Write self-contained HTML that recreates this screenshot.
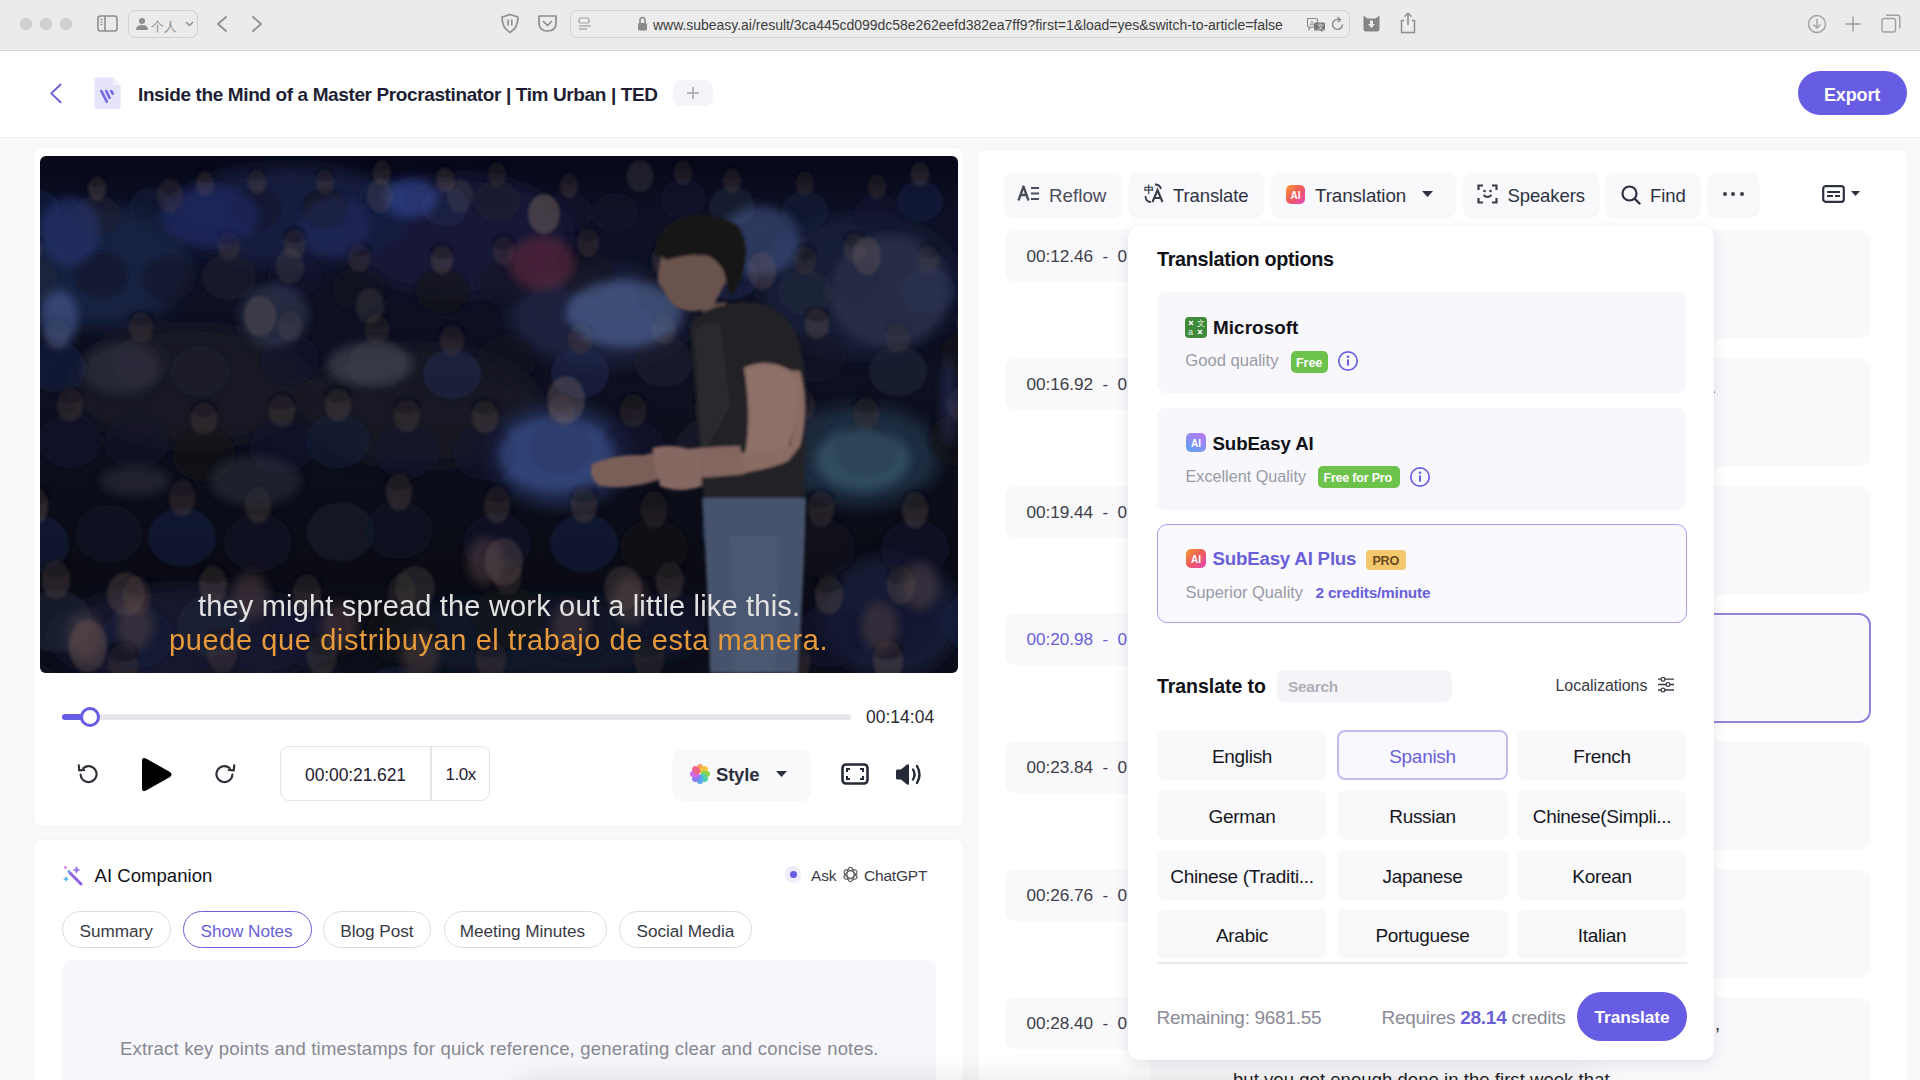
<!DOCTYPE html><html><head><meta charset="utf-8"><style>
html,body{margin:0;padding:0}
body{width:1920px;height:1080px;overflow:hidden;position:relative;background:#f9f9fb;font-family:"Liberation Sans",sans-serif}
.t{position:absolute;white-space:nowrap;line-height:1}
.b{position:absolute;box-sizing:border-box}
</style></head><body>
<div class="b" style="left:0px;top:0px;width:1920px;height:51px;background:#ebebeb;border-bottom:1px solid #d5d5d5"></div>
<div class="b" style="left:20px;top:18px;width:12px;height:12px;border-radius:50%;background:#d2d2d2;border:1px solid #c4c4c4"></div>
<div class="b" style="left:40px;top:18px;width:12px;height:12px;border-radius:50%;background:#d2d2d2;border:1px solid #c4c4c4"></div>
<div class="b" style="left:60px;top:18px;width:12px;height:12px;border-radius:50%;background:#d2d2d2;border:1px solid #c4c4c4"></div>
<svg class="b" style="left:97px;top:15px;" width="22" height="18" viewBox="0 0 22 18"><rect x="1" y="1" width="19" height="15" rx="2.5" fill="none" stroke="#8e8e8e" stroke-width="1.6"/><line x1="8" y1="1" x2="8" y2="16" stroke="#8e8e8e" stroke-width="1.6"/><line x1="3.5" y1="4.5" x2="5.5" y2="4.5" stroke="#8e8e8e" stroke-width="1.2"/><line x1="3.5" y1="7" x2="5.5" y2="7" stroke="#8e8e8e" stroke-width="1.2"/><line x1="3.5" y1="9.5" x2="5.5" y2="9.5" stroke="#8e8e8e" stroke-width="1.2"/></svg>
<div class="b" style="left:128px;top:10px;width:70px;height:28px;border:1px solid #d0d0d0;border-radius:7px"></div>
<svg class="b" style="left:135px;top:17px;" width="14" height="14" viewBox="0 0 14 14"><circle cx="7" cy="4" r="3" fill="#8e8e8e"/><path d="M1 13 Q1 8 7 8 Q13 8 13 13 Z" fill="#8e8e8e"/></svg>
<div class="t" style="left:151px;top:19.60px;font-size:13px;font-weight:400;color:#8e8e8e;">个人</div>
<svg class="b" style="left:185px;top:21px;" width="9" height="6" viewBox="0 0 9 6"><path d="M1 1 L4.5 4.5 L8 1" fill="none" stroke="#8e8e8e" stroke-width="1.5"/></svg>
<svg class="b" style="left:215px;top:15px;" width="14" height="18" viewBox="0 0 14 18"><path d="M11 2 L3 9 L11 16" fill="none" stroke="#8e8e8e" stroke-width="1.8" stroke-linecap="round" stroke-linejoin="round"/></svg>
<svg class="b" style="left:250px;top:15px;" width="14" height="18" viewBox="0 0 14 18"><path d="M3 2 L11 9 L3 16" fill="none" stroke="#8e8e8e" stroke-width="1.8" stroke-linecap="round" stroke-linejoin="round"/></svg>
<svg class="b" style="left:500px;top:13px;" width="20" height="21" viewBox="0 0 20 21"><path d="M10 1.5 L18 4 Q18 15 10 19.5 Q2 15 2 4 Z" fill="none" stroke="#8e8e8e" stroke-width="1.7" stroke-linejoin="round"/><rect x="7.3" y="6.5" width="1.6" height="6" fill="#8e8e8e"/><rect x="11" y="6.5" width="1.6" height="6" fill="#8e8e8e"/></svg>
<svg class="b" style="left:537px;top:14px;" width="21" height="19" viewBox="0 0 21 19"><path d="M2 2 H19 V9 Q19 17 10.5 17 Q2 17 2 9 Z" fill="none" stroke="#8e8e8e" stroke-width="1.7" stroke-linejoin="round"/><path d="M6.5 7.5 L10.5 11.5 L14.5 7.5" fill="none" stroke="#8e8e8e" stroke-width="1.7" stroke-linecap="round" stroke-linejoin="round"/></svg>
<div class="b" style="left:570px;top:10px;width:780px;height:28px;border:1px solid #d3d3d3;border-radius:7px;background:#ececec"></div>
<svg class="b" style="left:578px;top:17px;" width="14" height="15" viewBox="0 0 14 15"><rect x="1" y="1" width="10" height="5" rx="1.5" fill="none" stroke="#a0a0a0" stroke-width="1.2"/><line x1="1" y1="9" x2="13" y2="9" stroke="#a0a0a0" stroke-width="1.2"/><line x1="1" y1="12" x2="9" y2="12" stroke="#a0a0a0" stroke-width="1.2"/></svg>
<svg class="b" style="left:637px;top:16px;" width="11" height="15" viewBox="0 0 11 15"><path d="M3 7 V4.5 Q3 1.5 5.5 1.5 Q8 1.5 8 4.5 V7" fill="none" stroke="#8a8a8a" stroke-width="1.6"/><rect x="1" y="7" width="9" height="7.5" rx="1.5" fill="#8a8a8a"/></svg>
<div class="t" style="left:653px;top:17.75px;font-size:14px;font-weight:400;color:#3c3c3c;letter-spacing:-0.03px;">www.subeasy.ai/result/3ca445cd099dc58e262eefd382ea7ff9?first=1&amp;load=yes&amp;switch-to-article=false</div>
<svg class="b" style="left:1306px;top:17px;" width="20" height="16" viewBox="0 0 20 16"><path d="M1.5 1.5 H10 Q11.5 1.5 11.5 3 V8.5 Q11.5 10 10 10 H5 L3 12.5 V10 H3 Q1.5 10 1.5 8.5 Z" fill="none" stroke="#8a8a8a" stroke-width="1.1"/><text x="3.5" y="8.5" font-size="7" fill="#8a8a8a" font-family="Liberation Sans">A</text><path d="M9.5 5.5 H17.5 Q19 5.5 19 7 V12 Q19 13.5 17.5 13.5 H16.5 V15.5 L14.5 13.5 H9.5 Q8 13.5 8 12 V7 Q8 5.5 9.5 5.5 Z" fill="#7a7a7a"/><text x="11" y="12.3" font-size="6.5" fill="#ececec" font-family="Liberation Sans">文</text></svg>
<svg class="b" style="left:1331px;top:16px;" width="14" height="16" viewBox="0 0 14 16"><path d="M11.5 8.5 A5 5 0 1 1 8 3.6" fill="none" stroke="#8a8a8a" stroke-width="1.4"/><path d="M6.5 1 L9.5 3.7 L6.8 6.3" fill="none" stroke="#8a8a8a" stroke-width="1.4"/></svg>
<svg class="b" style="left:1362px;top:14px;" width="19" height="19" viewBox="0 0 19 19"><path d="M1.5 1.5 L5.5 4.5 H13.5 L17.5 1.5 V15 Q17.5 17.5 15 17.5 H4 Q1.5 17.5 1.5 15 Z" fill="#858585"/><path d="M8 6.5 H11 V10 H13 L9.5 14 L6 10 H8 Z" fill="#ececec"/></svg>
<svg class="b" style="left:1399px;top:12px;" width="18" height="22" viewBox="0 0 18 22"><path d="M5 8.5 H2.5 V20.5 H15.5 V8.5 H13" fill="none" stroke="#8e8e8e" stroke-width="1.5" stroke-linejoin="round"/><line x1="9" y1="1.5" x2="9" y2="13" stroke="#8e8e8e" stroke-width="1.5"/><path d="M5.5 4.5 L9 1.2 L12.5 4.5" fill="none" stroke="#8e8e8e" stroke-width="1.5"/></svg>
<svg class="b" style="left:1807px;top:14px;" width="20" height="20" viewBox="0 0 20 20"><circle cx="10" cy="10" r="8.5" fill="none" stroke="#a0a0a0" stroke-width="1.4"/><line x1="10" y1="5" x2="10" y2="14" stroke="#a0a0a0" stroke-width="1.4"/><path d="M6.5 10.5 L10 14 L13.5 10.5" fill="none" stroke="#a0a0a0" stroke-width="1.4"/></svg>
<svg class="b" style="left:1844px;top:15px;" width="18" height="18" viewBox="0 0 18 18"><line x1="9" y1="1.5" x2="9" y2="16.5" stroke="#a0a0a0" stroke-width="1.6"/><line x1="1.5" y1="9" x2="16.5" y2="9" stroke="#a0a0a0" stroke-width="1.6"/></svg>
<svg class="b" style="left:1881px;top:14px;" width="20" height="20" viewBox="0 0 20 20"><rect x="1" y="4.5" width="13.5" height="13.5" rx="2" fill="none" stroke="#a0a0a0" stroke-width="1.4"/><path d="M5 1.2 H16.5 Q18.8 1.2 18.8 3.5 V14.5" fill="none" stroke="#a0a0a0" stroke-width="1.4"/></svg>
<div class="b" style="left:0px;top:51px;width:1920px;height:87px;background:#ffffff;border-bottom:1px solid #f0f0f4"></div>
<svg class="b" style="left:48px;top:83px;" width="16" height="22" viewBox="0 0 16 22"><path d="M12.6 1.5 L3.3 10.4 L12.6 19.3" fill="none" stroke="#6a5fd8" stroke-width="1.9" stroke-linecap="round" stroke-linejoin="round"/></svg>
<svg class="b" style="left:93px;top:77px;" width="29" height="33" viewBox="0 0 29 33"><path d="M3 0.5 H20 L27.6 8 V30 Q27.6 32 25.6 32 H3.4 Q1.4 32 1.4 30 V2.5 Q1.4 0.5 3 0.5 Z" fill="#e6e4fa"/><path d="M20 0.5 V8 H27.6 Z" fill="#f3f2fd"/><path d="M8.3 14 L13.8 24.6 M13.2 14 L16.6 20.8 M18.2 14 L19.8 16.6" stroke="#7468e6" stroke-width="2.6" stroke-linecap="round"/></svg>
<div class="t" style="left:138px;top:84.92px;font-size:19px;font-weight:700;color:#1e1f33;letter-spacing:-0.38px;">Inside the Mind of a Master Procrastinator | Tim Urban | TED</div>
<div class="b" style="left:673px;top:80px;width:40px;height:26px;background:#f4f4f9;border-radius:8px"></div>
<svg class="b" style="left:685px;top:85px;" width="16" height="16" viewBox="0 0 16 16"><line x1="8" y1="2" x2="8" y2="14" stroke="#a3a3ad" stroke-width="1.5"/><line x1="2" y1="8" x2="14" y2="8" stroke="#a3a3ad" stroke-width="1.5"/></svg>
<div class="b" style="left:1798px;top:71px;width:109px;height:44px;background:#675ce4;border-radius:22px"></div>
<div class="t" style="left:1824px;top:85.96px;font-size:18px;font-weight:700;color:#ffffff;letter-spacing:-0.15px;">Export</div>
<div class="b" style="left:34px;top:148px;width:929px;height:678px;background:#fff;border-radius:8px;box-shadow:0 0 3px rgba(20,20,60,0.05)"></div>
<svg class="b" style="left:40px;top:156px;border-radius:6px;overflow:hidden" width="918" height="517" viewBox="0 0 918 517"><defs><filter id="b3" x="-20%" y="-20%" width="140%" height="140%"><feGaussianBlur stdDeviation="5"/></filter><filter id="b8" x="-50%" y="-50%" width="200%" height="200%"><feGaussianBlur stdDeviation="8"/></filter><filter id="b1" x="-20%" y="-20%" width="140%" height="140%"><feGaussianBlur stdDeviation="1.6"/></filter><linearGradient id="vg" x1="0" y1="0" x2="0" y2="1"><stop offset="0" stop-color="#070818"/><stop offset="0.12" stop-color="#0e1126"/><stop offset="0.45" stop-color="#0e1020"/><stop offset="0.8" stop-color="#0a0b14"/><stop offset="1" stop-color="#0c0e1a"/></linearGradient></defs><rect width="918" height="517" fill="url(#vg)"/><g filter="url(#b8)"><ellipse cx="60" cy="110" rx="90" ry="60" fill="#1c2448" opacity="0.8"/><ellipse cx="250" cy="60" rx="120" ry="50" fill="#1a2046" opacity="0.8"/><ellipse cx="420" cy="80" rx="110" ry="60" fill="#1a2040" opacity="0.7"/><ellipse cx="560" cy="160" rx="90" ry="50" fill="#222a48" opacity="0.7"/><ellipse cx="820" cy="130" rx="100" ry="70" fill="#1f2540" opacity="0.7"/><ellipse cx="150" cy="230" rx="120" ry="60" fill="#1a1c28" opacity="0.6"/><ellipse cx="380" cy="250" rx="120" ry="60" fill="#1b1d2a" opacity="0.6"/><ellipse cx="520" cy="300" rx="70" ry="50" fill="#263560" opacity="0.8"/><ellipse cx="820" cy="300" rx="80" ry="50" fill="#22344a" opacity="0.8"/><ellipse cx="150" cy="480" rx="140" ry="50" fill="#1a2036" opacity="0.7"/><ellipse cx="500" cy="480" rx="160" ry="40" fill="#161c34" opacity="0.6"/><ellipse cx="850" cy="460" rx="70" ry="60" fill="#1a2444" opacity="0.7"/></g><g filter="url(#b1)"><ellipse cx="-3" cy="54" rx="23" ry="20" fill="#1a2244" opacity="0.55"/><ellipse cx="57" cy="60" rx="23" ry="20" fill="#1c1f2e" opacity="0.55"/><ellipse cx="57" cy="33" rx="9" ry="12" fill="#5e4e4a" opacity="0.38"/><ellipse cx="57" cy="25" rx="10" ry="7" fill="#0c0c12" opacity="0.35"/><ellipse cx="112" cy="52" rx="23" ry="20" fill="#161c3a" opacity="0.55"/><ellipse cx="165" cy="54" rx="23" ry="20" fill="#161c3a" opacity="0.55"/><ellipse cx="165" cy="28" rx="9" ry="12" fill="#5e4e4a" opacity="0.38"/><ellipse cx="165" cy="20" rx="10" ry="7" fill="#0c0c12" opacity="0.35"/><ellipse cx="217" cy="53" rx="23" ry="20" fill="#13162a" opacity="0.55"/><ellipse cx="217" cy="26" rx="9" ry="12" fill="#554644" opacity="0.38"/><ellipse cx="217" cy="18" rx="10" ry="7" fill="#0c0c12" opacity="0.35"/><ellipse cx="285" cy="53" rx="23" ry="20" fill="#0e1018" opacity="0.55"/><ellipse cx="285" cy="26" rx="9" ry="12" fill="#4a3e3c" opacity="0.38"/><ellipse cx="285" cy="19" rx="10" ry="7" fill="#0c0c12" opacity="0.35"/><ellipse cx="342" cy="43" rx="23" ry="20" fill="#1a2244" opacity="0.55"/><ellipse cx="342" cy="17" rx="9" ry="12" fill="#4a3e3c" opacity="0.38"/><ellipse cx="342" cy="9" rx="10" ry="7" fill="#0c0c12" opacity="0.35"/><ellipse cx="405" cy="50" rx="23" ry="20" fill="#1e2850" opacity="0.55"/><ellipse cx="405" cy="24" rx="9" ry="12" fill="#5e4e4a" opacity="0.38"/><ellipse cx="405" cy="16" rx="10" ry="7" fill="#0c0c12" opacity="0.35"/><ellipse cx="457" cy="45" rx="23" ry="20" fill="#1c1f2e" opacity="0.55"/><ellipse cx="457" cy="19" rx="9" ry="12" fill="#3e3434" opacity="0.38"/><ellipse cx="457" cy="11" rx="10" ry="7" fill="#0c0c12" opacity="0.35"/><ellipse cx="529" cy="56" rx="23" ry="20" fill="#151932" opacity="0.55"/><ellipse cx="529" cy="30" rx="9" ry="12" fill="#4a3c3c" opacity="0.38"/><ellipse cx="529" cy="22" rx="10" ry="7" fill="#0c0c12" opacity="0.35"/><ellipse cx="575" cy="57" rx="23" ry="20" fill="#13162a" opacity="0.55"/><ellipse cx="643" cy="43" rx="23" ry="20" fill="#121830" opacity="0.55"/><ellipse cx="643" cy="17" rx="9" ry="12" fill="#3e3434" opacity="0.38"/><ellipse cx="643" cy="9" rx="10" ry="7" fill="#0c0c12" opacity="0.35"/><ellipse cx="692" cy="51" rx="23" ry="20" fill="#22263a" opacity="0.55"/><ellipse cx="692" cy="25" rx="9" ry="12" fill="#4a3c3c" opacity="0.38"/><ellipse cx="692" cy="17" rx="10" ry="7" fill="#0c0c12" opacity="0.35"/><ellipse cx="765" cy="55" rx="23" ry="20" fill="#161c3a" opacity="0.55"/><ellipse cx="765" cy="28" rx="9" ry="12" fill="#3e3434" opacity="0.38"/><ellipse cx="765" cy="21" rx="10" ry="7" fill="#0c0c12" opacity="0.35"/><ellipse cx="837" cy="58" rx="23" ry="20" fill="#151932" opacity="0.55"/><ellipse cx="837" cy="31" rx="9" ry="12" fill="#3e3434" opacity="0.38"/><ellipse cx="837" cy="24" rx="10" ry="7" fill="#0c0c12" opacity="0.35"/><ellipse cx="880" cy="45" rx="23" ry="20" fill="#1a2244" opacity="0.55"/><ellipse cx="880" cy="18" rx="9" ry="12" fill="#554644" opacity="0.38"/><ellipse cx="880" cy="11" rx="10" ry="7" fill="#0c0c12" opacity="0.35"/><ellipse cx="-9" cy="124" rx="27" ry="23" fill="#22263a" opacity="0.55"/><ellipse cx="-9" cy="93" rx="11" ry="14" fill="#5e4e4a" opacity="0.38"/><ellipse cx="-9" cy="84" rx="12" ry="8" fill="#0c0c12" opacity="0.35"/><ellipse cx="61" cy="119" rx="27" ry="23" fill="#171a2a" opacity="0.55"/><ellipse cx="129" cy="123" rx="27" ry="23" fill="#171a2a" opacity="0.55"/><ellipse cx="189" cy="121" rx="27" ry="23" fill="#1c1f2e" opacity="0.55"/><ellipse cx="189" cy="90" rx="11" ry="14" fill="#4a3e3c" opacity="0.38"/><ellipse cx="189" cy="81" rx="12" ry="8" fill="#0c0c12" opacity="0.35"/><ellipse cx="255" cy="119" rx="27" ry="23" fill="#121830" opacity="0.55"/><ellipse cx="255" cy="88" rx="11" ry="14" fill="#4a3e3c" opacity="0.38"/><ellipse cx="255" cy="79" rx="12" ry="8" fill="#0c0c12" opacity="0.35"/><ellipse cx="319" cy="133" rx="27" ry="23" fill="#101220" opacity="0.55"/><ellipse cx="319" cy="102" rx="11" ry="14" fill="#4a3c3c" opacity="0.38"/><ellipse cx="319" cy="93" rx="12" ry="8" fill="#0c0c12" opacity="0.35"/><ellipse cx="402" cy="135" rx="27" ry="23" fill="#0e1018" opacity="0.55"/><ellipse cx="402" cy="104" rx="11" ry="14" fill="#5e4e4a" opacity="0.38"/><ellipse cx="402" cy="95" rx="12" ry="8" fill="#0c0c12" opacity="0.35"/><ellipse cx="464" cy="126" rx="27" ry="23" fill="#171a2a" opacity="0.55"/><ellipse cx="464" cy="95" rx="11" ry="14" fill="#4a3c3c" opacity="0.38"/><ellipse cx="464" cy="86" rx="12" ry="8" fill="#0c0c12" opacity="0.35"/><ellipse cx="548" cy="118" rx="27" ry="23" fill="#101220" opacity="0.55"/><ellipse cx="548" cy="87" rx="11" ry="14" fill="#4a3c3c" opacity="0.38"/><ellipse cx="548" cy="78" rx="12" ry="8" fill="#0c0c12" opacity="0.35"/><ellipse cx="623" cy="135" rx="27" ry="23" fill="#101220" opacity="0.55"/><ellipse cx="623" cy="104" rx="11" ry="14" fill="#554644" opacity="0.38"/><ellipse cx="623" cy="95" rx="12" ry="8" fill="#0c0c12" opacity="0.35"/><ellipse cx="691" cy="121" rx="27" ry="23" fill="#1e2850" opacity="0.55"/><ellipse cx="691" cy="90" rx="11" ry="14" fill="#5e4e4a" opacity="0.38"/><ellipse cx="691" cy="81" rx="12" ry="8" fill="#0c0c12" opacity="0.35"/><ellipse cx="765" cy="136" rx="27" ry="23" fill="#22263a" opacity="0.55"/><ellipse cx="765" cy="105" rx="11" ry="14" fill="#3e3434" opacity="0.38"/><ellipse cx="765" cy="96" rx="12" ry="8" fill="#0c0c12" opacity="0.35"/><ellipse cx="815" cy="123" rx="27" ry="23" fill="#151932" opacity="0.55"/><ellipse cx="815" cy="92" rx="11" ry="14" fill="#554644" opacity="0.38"/><ellipse cx="815" cy="83" rx="12" ry="8" fill="#0c0c12" opacity="0.35"/><ellipse cx="888" cy="135" rx="27" ry="23" fill="#1e2850" opacity="0.55"/><ellipse cx="888" cy="104" rx="11" ry="14" fill="#4a3e3c" opacity="0.38"/><ellipse cx="888" cy="95" rx="12" ry="8" fill="#0c0c12" opacity="0.35"/><ellipse cx="17" cy="211" rx="29" ry="25" fill="#1a2244" opacity="0.55"/><ellipse cx="17" cy="178" rx="12" ry="15" fill="#3e3434" opacity="0.38"/><ellipse cx="17" cy="168" rx="13" ry="8" fill="#0c0c12" opacity="0.35"/><ellipse cx="101" cy="206" rx="29" ry="25" fill="#1c1f2e" opacity="0.55"/><ellipse cx="101" cy="172" rx="12" ry="15" fill="#4a3e3c" opacity="0.38"/><ellipse cx="101" cy="162" rx="13" ry="8" fill="#0c0c12" opacity="0.35"/><ellipse cx="160" cy="215" rx="29" ry="25" fill="#1c1f2e" opacity="0.55"/><ellipse cx="250" cy="203" rx="29" ry="25" fill="#121830" opacity="0.55"/><ellipse cx="250" cy="170" rx="12" ry="15" fill="#4a3c3c" opacity="0.38"/><ellipse cx="250" cy="160" rx="13" ry="8" fill="#0c0c12" opacity="0.35"/><ellipse cx="337" cy="208" rx="29" ry="25" fill="#1c1f2e" opacity="0.55"/><ellipse cx="337" cy="174" rx="12" ry="15" fill="#3e3434" opacity="0.38"/><ellipse cx="337" cy="165" rx="13" ry="8" fill="#0c0c12" opacity="0.35"/><ellipse cx="412" cy="218" rx="29" ry="25" fill="#1e2850" opacity="0.55"/><ellipse cx="412" cy="185" rx="12" ry="15" fill="#4a3c3c" opacity="0.38"/><ellipse cx="412" cy="175" rx="13" ry="8" fill="#0c0c12" opacity="0.35"/><ellipse cx="467" cy="203" rx="29" ry="25" fill="#101220" opacity="0.55"/><ellipse cx="540" cy="217" rx="29" ry="25" fill="#1e2850" opacity="0.55"/><ellipse cx="540" cy="183" rx="12" ry="15" fill="#4a3c3c" opacity="0.38"/><ellipse cx="540" cy="173" rx="13" ry="8" fill="#0c0c12" opacity="0.35"/><ellipse cx="624" cy="206" rx="29" ry="25" fill="#1c1f2e" opacity="0.55"/><ellipse cx="624" cy="173" rx="12" ry="15" fill="#554644" opacity="0.38"/><ellipse cx="624" cy="163" rx="13" ry="8" fill="#0c0c12" opacity="0.35"/><ellipse cx="705" cy="200" rx="29" ry="25" fill="#171a2a" opacity="0.55"/><ellipse cx="705" cy="167" rx="12" ry="15" fill="#4a3c3c" opacity="0.38"/><ellipse cx="705" cy="157" rx="13" ry="8" fill="#0c0c12" opacity="0.35"/><ellipse cx="777" cy="201" rx="29" ry="25" fill="#13162a" opacity="0.55"/><ellipse cx="777" cy="168" rx="12" ry="15" fill="#5e4e4a" opacity="0.38"/><ellipse cx="777" cy="158" rx="13" ry="8" fill="#0c0c12" opacity="0.35"/><ellipse cx="858" cy="215" rx="29" ry="25" fill="#22263a" opacity="0.55"/><ellipse cx="858" cy="182" rx="12" ry="15" fill="#3e3434" opacity="0.38"/><ellipse cx="858" cy="172" rx="13" ry="8" fill="#0c0c12" opacity="0.35"/><ellipse cx="929" cy="199" rx="29" ry="25" fill="#0e1018" opacity="0.55"/><ellipse cx="929" cy="165" rx="12" ry="15" fill="#554644" opacity="0.38"/><ellipse cx="929" cy="156" rx="13" ry="8" fill="#0c0c12" opacity="0.35"/><ellipse cx="30" cy="285" rx="32" ry="27" fill="#151932" opacity="0.55"/><ellipse cx="30" cy="249" rx="13" ry="16" fill="#4a3e3c" opacity="0.38"/><ellipse cx="30" cy="239" rx="14" ry="9" fill="#0c0c12" opacity="0.35"/><ellipse cx="96" cy="286" rx="32" ry="27" fill="#171a2a" opacity="0.55"/><ellipse cx="164" cy="299" rx="32" ry="27" fill="#0e1018" opacity="0.55"/><ellipse cx="164" cy="263" rx="13" ry="16" fill="#4a3e3c" opacity="0.38"/><ellipse cx="164" cy="252" rx="14" ry="9" fill="#0c0c12" opacity="0.35"/><ellipse cx="242" cy="291" rx="32" ry="27" fill="#121830" opacity="0.55"/><ellipse cx="242" cy="255" rx="13" ry="16" fill="#4a3e3c" opacity="0.38"/><ellipse cx="242" cy="245" rx="14" ry="9" fill="#0c0c12" opacity="0.35"/><ellipse cx="298" cy="285" rx="32" ry="27" fill="#161c3a" opacity="0.55"/><ellipse cx="298" cy="249" rx="13" ry="16" fill="#554644" opacity="0.38"/><ellipse cx="298" cy="238" rx="14" ry="9" fill="#0c0c12" opacity="0.35"/><ellipse cx="367" cy="296" rx="32" ry="27" fill="#121830" opacity="0.55"/><ellipse cx="367" cy="260" rx="13" ry="16" fill="#4a3e3c" opacity="0.38"/><ellipse cx="367" cy="249" rx="14" ry="9" fill="#0c0c12" opacity="0.35"/><ellipse cx="445" cy="297" rx="32" ry="27" fill="#121830" opacity="0.55"/><ellipse cx="445" cy="261" rx="13" ry="16" fill="#554644" opacity="0.38"/><ellipse cx="445" cy="250" rx="14" ry="9" fill="#0c0c12" opacity="0.35"/><ellipse cx="521" cy="291" rx="32" ry="27" fill="#121830" opacity="0.55"/><ellipse cx="521" cy="255" rx="13" ry="16" fill="#4a3c3c" opacity="0.38"/><ellipse cx="521" cy="245" rx="14" ry="9" fill="#0c0c12" opacity="0.35"/><ellipse cx="593" cy="291" rx="32" ry="27" fill="#121830" opacity="0.55"/><ellipse cx="593" cy="255" rx="13" ry="16" fill="#3e3434" opacity="0.38"/><ellipse cx="593" cy="245" rx="14" ry="9" fill="#0c0c12" opacity="0.35"/><ellipse cx="668" cy="291" rx="32" ry="27" fill="#1c1f2e" opacity="0.55"/><ellipse cx="668" cy="255" rx="13" ry="16" fill="#3e3434" opacity="0.38"/><ellipse cx="668" cy="244" rx="14" ry="9" fill="#0c0c12" opacity="0.35"/><ellipse cx="762" cy="285" rx="32" ry="27" fill="#22263a" opacity="0.55"/><ellipse cx="762" cy="249" rx="13" ry="16" fill="#4a3c3c" opacity="0.38"/><ellipse cx="762" cy="239" rx="14" ry="9" fill="#0c0c12" opacity="0.35"/><ellipse cx="826" cy="294" rx="32" ry="27" fill="#171a2a" opacity="0.55"/><ellipse cx="826" cy="258" rx="13" ry="16" fill="#3e3434" opacity="0.38"/><ellipse cx="826" cy="248" rx="14" ry="9" fill="#0c0c12" opacity="0.35"/><ellipse cx="920" cy="284" rx="32" ry="27" fill="#0e1018" opacity="0.55"/><ellipse cx="920" cy="248" rx="13" ry="16" fill="#554644" opacity="0.38"/><ellipse cx="920" cy="238" rx="14" ry="9" fill="#0c0c12" opacity="0.35"/><ellipse cx="-5" cy="388" rx="34" ry="29" fill="#1a2244" opacity="0.55"/><ellipse cx="-5" cy="350" rx="13" ry="18" fill="#5e4e4a" opacity="0.38"/><ellipse cx="-5" cy="339" rx="14" ry="10" fill="#0c0c12" opacity="0.35"/><ellipse cx="69" cy="378" rx="34" ry="29" fill="#171a2a" opacity="0.55"/><ellipse cx="142" cy="381" rx="34" ry="29" fill="#1a2244" opacity="0.55"/><ellipse cx="142" cy="342" rx="13" ry="18" fill="#4a3c3c" opacity="0.38"/><ellipse cx="142" cy="331" rx="14" ry="10" fill="#0c0c12" opacity="0.35"/><ellipse cx="218" cy="387" rx="34" ry="29" fill="#171a2a" opacity="0.55"/><ellipse cx="218" cy="349" rx="13" ry="18" fill="#4a3e3c" opacity="0.38"/><ellipse cx="218" cy="338" rx="14" ry="10" fill="#0c0c12" opacity="0.35"/><ellipse cx="301" cy="376" rx="34" ry="29" fill="#1c1f2e" opacity="0.55"/><ellipse cx="359" cy="374" rx="34" ry="29" fill="#13162a" opacity="0.55"/><ellipse cx="359" cy="336" rx="13" ry="18" fill="#554644" opacity="0.38"/><ellipse cx="359" cy="325" rx="14" ry="10" fill="#0c0c12" opacity="0.35"/><ellipse cx="457" cy="387" rx="34" ry="29" fill="#151932" opacity="0.55"/><ellipse cx="457" cy="349" rx="13" ry="18" fill="#4a3e3c" opacity="0.38"/><ellipse cx="457" cy="337" rx="14" ry="10" fill="#0c0c12" opacity="0.35"/><ellipse cx="544" cy="387" rx="34" ry="29" fill="#1a2244" opacity="0.55"/><ellipse cx="544" cy="349" rx="13" ry="18" fill="#554644" opacity="0.38"/><ellipse cx="544" cy="338" rx="14" ry="10" fill="#0c0c12" opacity="0.35"/><ellipse cx="614" cy="392" rx="34" ry="29" fill="#0e1018" opacity="0.55"/><ellipse cx="614" cy="354" rx="13" ry="18" fill="#3e3434" opacity="0.38"/><ellipse cx="614" cy="343" rx="14" ry="10" fill="#0c0c12" opacity="0.35"/><ellipse cx="695" cy="375" rx="34" ry="29" fill="#1a2244" opacity="0.55"/><ellipse cx="695" cy="336" rx="13" ry="18" fill="#3e3434" opacity="0.38"/><ellipse cx="695" cy="325" rx="14" ry="10" fill="#0c0c12" opacity="0.35"/><ellipse cx="781" cy="392" rx="34" ry="29" fill="#101220" opacity="0.55"/><ellipse cx="781" cy="353" rx="13" ry="18" fill="#4a3e3c" opacity="0.38"/><ellipse cx="781" cy="342" rx="14" ry="10" fill="#0c0c12" opacity="0.35"/><ellipse cx="875" cy="393" rx="34" ry="29" fill="#151932" opacity="0.55"/><ellipse cx="875" cy="354" rx="13" ry="18" fill="#554644" opacity="0.38"/><ellipse cx="875" cy="343" rx="14" ry="10" fill="#0c0c12" opacity="0.35"/><ellipse cx="16" cy="465" rx="36" ry="31" fill="#22263a" opacity="0.55"/><ellipse cx="16" cy="424" rx="14" ry="19" fill="#554644" opacity="0.38"/><ellipse cx="16" cy="412" rx="15" ry="10" fill="#0c0c12" opacity="0.35"/><ellipse cx="97" cy="481" rx="36" ry="31" fill="#161c3a" opacity="0.55"/><ellipse cx="97" cy="440" rx="14" ry="19" fill="#4a3e3c" opacity="0.38"/><ellipse cx="97" cy="428" rx="15" ry="10" fill="#0c0c12" opacity="0.35"/><ellipse cx="173" cy="470" rx="36" ry="31" fill="#22263a" opacity="0.55"/><ellipse cx="173" cy="429" rx="14" ry="19" fill="#5e4e4a" opacity="0.38"/><ellipse cx="173" cy="418" rx="15" ry="10" fill="#0c0c12" opacity="0.35"/><ellipse cx="267" cy="479" rx="36" ry="31" fill="#121830" opacity="0.55"/><ellipse cx="267" cy="438" rx="14" ry="19" fill="#554644" opacity="0.38"/><ellipse cx="267" cy="426" rx="15" ry="10" fill="#0c0c12" opacity="0.35"/><ellipse cx="362" cy="477" rx="36" ry="31" fill="#0e1018" opacity="0.55"/><ellipse cx="362" cy="437" rx="14" ry="19" fill="#3e3434" opacity="0.38"/><ellipse cx="362" cy="425" rx="15" ry="10" fill="#0c0c12" opacity="0.35"/><ellipse cx="468" cy="461" rx="36" ry="31" fill="#0e1018" opacity="0.55"/><ellipse cx="468" cy="420" rx="14" ry="19" fill="#3e3434" opacity="0.38"/><ellipse cx="468" cy="408" rx="15" ry="10" fill="#0c0c12" opacity="0.35"/><ellipse cx="537" cy="474" rx="36" ry="31" fill="#171a2a" opacity="0.55"/><ellipse cx="630" cy="466" rx="36" ry="31" fill="#151932" opacity="0.55"/><ellipse cx="630" cy="425" rx="14" ry="19" fill="#554644" opacity="0.38"/><ellipse cx="630" cy="413" rx="15" ry="10" fill="#0c0c12" opacity="0.35"/><ellipse cx="707" cy="466" rx="36" ry="31" fill="#1e2850" opacity="0.55"/><ellipse cx="789" cy="480" rx="36" ry="31" fill="#151932" opacity="0.55"/><ellipse cx="789" cy="439" rx="14" ry="19" fill="#554644" opacity="0.38"/><ellipse cx="789" cy="427" rx="15" ry="10" fill="#0c0c12" opacity="0.35"/><ellipse cx="861" cy="470" rx="36" ry="31" fill="#121830" opacity="0.55"/><ellipse cx="861" cy="429" rx="14" ry="19" fill="#554644" opacity="0.38"/><ellipse cx="861" cy="418" rx="15" ry="10" fill="#0c0c12" opacity="0.35"/><ellipse cx="939" cy="466" rx="36" ry="31" fill="#1a2244" opacity="0.55"/><ellipse cx="939" cy="425" rx="14" ry="19" fill="#4a3e3c" opacity="0.38"/><ellipse cx="939" cy="413" rx="15" ry="10" fill="#0c0c12" opacity="0.35"/><ellipse cx="-12" cy="538" rx="38" ry="32" fill="#101220" opacity="0.55"/><ellipse cx="83" cy="551" rx="38" ry="32" fill="#101220" opacity="0.55"/><ellipse cx="83" cy="508" rx="15" ry="20" fill="#3e3434" opacity="0.38"/><ellipse cx="83" cy="495" rx="16" ry="11" fill="#0c0c12" opacity="0.35"/><ellipse cx="182" cy="539" rx="38" ry="32" fill="#101220" opacity="0.55"/><ellipse cx="182" cy="496" rx="15" ry="20" fill="#4a3c3c" opacity="0.38"/><ellipse cx="182" cy="483" rx="16" ry="11" fill="#0c0c12" opacity="0.35"/><ellipse cx="282" cy="543" rx="38" ry="32" fill="#171a2a" opacity="0.55"/><ellipse cx="282" cy="500" rx="15" ry="20" fill="#4a3e3c" opacity="0.38"/><ellipse cx="282" cy="488" rx="16" ry="11" fill="#0c0c12" opacity="0.35"/><ellipse cx="356" cy="543" rx="38" ry="32" fill="#161c3a" opacity="0.55"/><ellipse cx="451" cy="547" rx="38" ry="32" fill="#0e1018" opacity="0.55"/><ellipse cx="451" cy="504" rx="15" ry="20" fill="#4a3c3c" opacity="0.38"/><ellipse cx="451" cy="491" rx="16" ry="11" fill="#0c0c12" opacity="0.35"/><ellipse cx="521" cy="552" rx="38" ry="32" fill="#171a2a" opacity="0.55"/><ellipse cx="609" cy="546" rx="38" ry="32" fill="#0e1018" opacity="0.55"/><ellipse cx="609" cy="503" rx="15" ry="20" fill="#3e3434" opacity="0.38"/><ellipse cx="609" cy="490" rx="16" ry="11" fill="#0c0c12" opacity="0.35"/><ellipse cx="685" cy="548" rx="38" ry="32" fill="#121830" opacity="0.55"/><ellipse cx="755" cy="548" rx="38" ry="32" fill="#22263a" opacity="0.55"/><ellipse cx="755" cy="505" rx="15" ry="20" fill="#4a3c3c" opacity="0.38"/><ellipse cx="755" cy="492" rx="16" ry="11" fill="#0c0c12" opacity="0.35"/><ellipse cx="848" cy="548" rx="38" ry="32" fill="#1c1f2e" opacity="0.55"/><ellipse cx="848" cy="505" rx="15" ry="20" fill="#5e4e4a" opacity="0.38"/><ellipse cx="848" cy="493" rx="16" ry="11" fill="#0c0c12" opacity="0.35"/><ellipse cx="937" cy="543" rx="38" ry="32" fill="#0e1018" opacity="0.55"/><ellipse cx="937" cy="500" rx="15" ry="20" fill="#4a3c3c" opacity="0.38"/><ellipse cx="937" cy="487" rx="16" ry="11" fill="#0c0c12" opacity="0.35"/></g><g filter="url(#b3)"><ellipse cx="19.0" cy="162.5" rx="19.0" ry="28.5" fill="#4a5e96" opacity="0.60"/><ellipse cx="583.5" cy="157.5" rx="57.5" ry="33.5" fill="#5a6ea6" opacity="0.56"/><ellipse cx="516.5" cy="298.5" rx="57.5" ry="36.5" fill="#3e5290" opacity="0.60"/><ellipse cx="822.5" cy="303.5" rx="47.5" ry="31.5" fill="#3a6072" opacity="0.60"/><ellipse cx="719.5" cy="85.0" rx="40.5" ry="35.0" fill="#4a5c92" opacity="0.52"/><ellipse cx="502.0" cy="107.0" rx="33.0" ry="27.0" fill="#6a2a38" opacity="0.56"/><ellipse cx="370.5" cy="42.0" rx="26.5" ry="20.0" fill="#3a55b0" opacity="0.48"/><ellipse cx="234.0" cy="159.5" rx="34.0" ry="31.5" fill="#4a5470" opacity="0.40"/><ellipse cx="330.0" cy="208.0" rx="43.0" ry="22.0" fill="#6a6c78" opacity="0.36"/><ellipse cx="81.5" cy="212.5" rx="38.5" ry="26.5" fill="#40424e" opacity="0.40"/><ellipse cx="848.5" cy="135.5" rx="59.5" ry="55.5" fill="#3a4058" opacity="0.48"/><ellipse cx="30.0" cy="75.0" rx="30.0" ry="35.0" fill="#2a3a80" opacity="0.48"/><ellipse cx="170.0" cy="60.0" rx="50.0" ry="30.0" fill="#243080" opacity="0.40"/><ellipse cx="295.0" cy="70.0" rx="35.0" ry="30.0" fill="#2a3070" opacity="0.40"/><ellipse cx="909.0" cy="245.0" rx="9.0" ry="45.0" fill="#2a3460" opacity="0.48"/><ellipse cx="215.0" cy="325.0" rx="45.0" ry="25.0" fill="#3a3c48" opacity="0.40"/><ellipse cx="95.0" cy="325.0" rx="35.0" ry="15.0" fill="#4a4c58" opacity="0.32"/><ellipse cx="45" cy="480" rx="18" ry="24" fill="#5a4845" opacity="0.45"/><ellipse cx="95" cy="470" rx="18" ry="24" fill="#5a4845" opacity="0.45"/><ellipse cx="210" cy="440" rx="18" ry="24" fill="#5a4845" opacity="0.45"/><ellipse cx="380" cy="500" rx="18" ry="24" fill="#5a4845" opacity="0.45"/><ellipse cx="445" cy="405" rx="18" ry="24" fill="#5a4845" opacity="0.45"/><ellipse cx="530" cy="470" rx="18" ry="24" fill="#5a4845" opacity="0.45"/><ellipse cx="590" cy="445" rx="18" ry="24" fill="#5a4845" opacity="0.45"/><ellipse cx="840" cy="470" rx="18" ry="24" fill="#5a4845" opacity="0.45"/><ellipse cx="880" cy="430" rx="18" ry="24" fill="#5a4845" opacity="0.45"/><ellipse cx="300" cy="470" rx="18" ry="24" fill="#5a4845" opacity="0.45"/><ellipse cx="700" cy="500" rx="18" ry="24" fill="#5a4845" opacity="0.45"/></g><g filter="url(#b1)"><ellipse cx="504" cy="58" rx="16" ry="20" fill="#8a7a62" opacity="0.39"/><ellipse cx="220" cy="160" rx="16" ry="20" fill="#6a5a58" opacity="0.33"/><ellipse cx="526" cy="244" rx="19" ry="24" fill="#7a6a6a" opacity="0.36"/><ellipse cx="827" cy="100" rx="14" ry="19" fill="#6e5e5a" opacity="0.33"/><ellipse cx="722" cy="115" rx="14" ry="19" fill="#6e5e5a" opacity="0.30"/><ellipse cx="464" cy="406" rx="19" ry="24" fill="#6e5e5a" opacity="0.33"/><ellipse cx="86" cy="438" rx="19" ry="22" fill="#6a5650" opacity="0.33"/><ellipse cx="48" cy="490" rx="19" ry="26" fill="#7a6058" opacity="0.33"/><ellipse cx="583" cy="432" rx="19" ry="22" fill="#6a5a55" opacity="0.30"/><ellipse cx="375" cy="432" rx="20" ry="22" fill="#5e5250" opacity="0.30"/><ellipse cx="340" cy="40" rx="13" ry="17" fill="#5e5252" opacity="0.28"/><ellipse cx="250" cy="110" rx="14" ry="18" fill="#5a4e4e" opacity="0.28"/><ellipse cx="130" cy="40" rx="13" ry="17" fill="#4e4444" opacity="0.28"/><ellipse cx="420" cy="40" rx="13" ry="17" fill="#5a4e4e" opacity="0.28"/><ellipse cx="600" cy="20" rx="13" ry="16" fill="#5a5050" opacity="0.28"/><ellipse cx="330" cy="150" rx="14" ry="18" fill="#5e5252" opacity="0.25"/></g><g filter="url(#b1)"><path d="M662 148 L686 146 L690 170 L664 172 Z" fill="#5e4a46"/><path d="M650 168 Q660 152 700 146 Q740 145 756 178 Q768 210 766 260 L764 345 L664 345 Q660 290 656 240 Q652 200 650 168 Z" fill="#222326"/><path d="M655 175 Q668 165 680 168 L690 250 L662 300 Q658 240 655 175 Z" fill="#34363a" opacity="0.4"/><path d="M662 342 L766 342 Q764 420 758 517 L670 517 Q668 430 662 342 Z" fill="#46536c"/><path d="M690 380 L740 380 L735 517 L695 517 Z" fill="#55627c" opacity="0.35"/><path d="M704 212 Q730 200 756 218 Q760 255 750 290 Q700 300 640 300 L618 300 L616 322 L650 322 Q720 318 748 305 L760 290 Q770 250 760 215 Z" fill="#8a6c64"/><path d="M704 212 Q730 200 756 218 Q762 255 748 292 L705 298 Q712 260 704 212 Z" fill="#8e7068"/><path d="M600 300 Q630 292 700 290 L705 318 Q640 325 600 320 Z" fill="#846660"/><path d="M552 308 Q580 296 612 300 L618 324 Q590 334 560 330 Q548 322 552 308 Z" fill="#7a5e58"/><path d="M612 292 Q640 285 660 300 L662 330 Q640 338 620 330 Z" fill="#866862"/><path d="M622 98 Q617 114 618 127 L624 135 Q628 145 636 151 Q652 159 672 152 L688 122 L688 100 Z" fill="#6a534e"/><path d="M616 96 Q614 74 640 62 Q672 52 698 70 Q710 88 704 112 Q700 132 690 140 L684 116 Q676 100 660 98 Q640 100 626 104 Z" fill="#161518"/></g></svg>
<div class="t" style="left:198px;top:591.55px;font-size:29px;font-weight:400;color:#e2e2e2;letter-spacing:0.18px;">they might spread the work out a little like this.</div>
<div class="t" style="left:169px;top:625.55px;font-size:29px;font-weight:400;color:#e59a3c;letter-spacing:0.6px;">puede que distribuyan el trabajo de esta manera.</div>
<div class="b" style="left:62px;top:714px;width:789px;height:5.5px;background:#e6e6ec;border-radius:3px"></div>
<div class="b" style="left:62px;top:714px;width:28px;height:5.5px;background:#675ce4;border-radius:3px"></div>
<div class="b" style="left:80px;top:707px;width:20px;height:20px;border-radius:50%;background:#fff;border:3px solid #675ce4"></div>
<div class="t" style="left:866px;top:708.99px;font-size:17.5px;font-weight:400;color:#2a2a33;">00:14:04</div>
<svg class="b" style="left:76px;top:762px;" width="24" height="24" viewBox="0 0 24 24"><path d="M4.6 12.5 A8 8 0 1 0 7.2 6.2" fill="none" stroke="#2e2e38" stroke-width="2.1" stroke-linecap="round"/><path d="M2.8 3.2 L3.2 8.4 L8.2 8" fill="none" stroke="#2e2e38" stroke-width="2.1" stroke-linecap="round" stroke-linejoin="round"/></svg>
<svg class="b" style="left:140px;top:755px;" width="34" height="39" viewBox="0 0 34 39"><path d="M6 3.5 Q2 1.5 2 6 V33 Q2 37.5 6 35.5 L30 22 Q33 19.5 30 17 Z" fill="#000"/></svg>
<svg class="b" style="left:213px;top:762px;" width="24" height="24" viewBox="0 0 24 24"><path d="M19.4 12.5 A8 8 0 1 1 16.8 6.2" fill="none" stroke="#2e2e38" stroke-width="2.1" stroke-linecap="round"/><path d="M21.2 3.2 L20.8 8.4 L15.8 8" fill="none" stroke="#2e2e38" stroke-width="2.1" stroke-linecap="round" stroke-linejoin="round"/></svg>
<div class="b" style="left:280px;top:746px;width:210px;height:55px;border:1.5px solid #e4e4ea;border-radius:9px"></div>
<div class="b" style="left:430px;top:746px;width:1.5px;height:55px;background:#e4e4ea"></div>
<div class="t" style="left:305px;top:766.99px;font-size:17.5px;font-weight:400;color:#1f2030;letter-spacing:-0.1px;">00:00:21.621</div>
<div class="t" style="left:445.5px;top:766.41px;font-size:17px;font-weight:400;color:#1f2030;letter-spacing:-0.5px;">1.0x</div>
<div class="b" style="left:673px;top:749px;width:138px;height:51px;background:#f9f9fc;border-radius:9px;box-shadow:0 1px 2px rgba(30,30,80,0.04)"></div>
<svg class="b" style="left:690px;top:764px;" width="20" height="20" viewBox="0 0 20 20"><ellipse cx="10" cy="4.6" rx="3.3" ry="4.6" fill="#f4a25a" transform="rotate(0 10 10)"/><ellipse cx="10" cy="4.6" rx="3.3" ry="4.6" fill="#f7c442" transform="rotate(45 10 10)"/><ellipse cx="10" cy="4.6" rx="3.3" ry="4.6" fill="#8fd24f" transform="rotate(90 10 10)"/><ellipse cx="10" cy="4.6" rx="3.3" ry="4.6" fill="#4fd1b0" transform="rotate(135 10 10)"/><ellipse cx="10" cy="4.6" rx="3.3" ry="4.6" fill="#5aa8f0" transform="rotate(180 10 10)"/><ellipse cx="10" cy="4.6" rx="3.3" ry="4.6" fill="#8a7cf0" transform="rotate(225 10 10)"/><ellipse cx="10" cy="4.6" rx="3.3" ry="4.6" fill="#d06ae8" transform="rotate(270 10 10)"/><ellipse cx="10" cy="4.6" rx="3.3" ry="4.6" fill="#f0648a" transform="rotate(315 10 10)"/></svg>
<div class="t" style="left:716px;top:765.54px;font-size:18.5px;font-weight:700;color:#2c2f3c;letter-spacing:-0.2px;">Style</div>
<svg class="b" style="left:775px;top:770px;" width="13" height="8" viewBox="0 0 13 8"><path d="M1 1 H12 L6.5 7 Z" fill="#2c2f3c"/></svg>
<svg class="b" style="left:841px;top:763px;" width="28" height="22" viewBox="0 0 28 22"><rect x="1.5" y="1.5" width="25" height="19" rx="3.5" fill="none" stroke="#262a36" stroke-width="2.6"/><path d="M6 9 V6 H9 M19 6 H22 V9 M22 13 V16 H19 M9 16 H6 V13" fill="none" stroke="#262a36" stroke-width="2"/></svg>
<svg class="b" style="left:895px;top:763px;" width="29" height="23" viewBox="0 0 29 23"><path d="M1 8 Q1 6.5 2.5 6.5 H6 L12 1.5 Q14 0.5 14 2.5 V20.5 Q14 22.5 12 21.5 L6 16.5 H2.5 Q1 16.5 1 15 Z" fill="#262a36"/><path d="M18 6.5 Q21 11.5 18 16.5" fill="none" stroke="#262a36" stroke-width="2.4" stroke-linecap="round"/><path d="M22 3 Q27 11.5 22 20" fill="none" stroke="#262a36" stroke-width="2.4" stroke-linecap="round"/></svg>
<div class="b" style="left:34px;top:840px;width:929px;height:260px;background:#fff;border-radius:8px;box-shadow:0 0 3px rgba(20,20,60,0.05)"></div>
<svg class="b" style="left:62px;top:864px;" width="22" height="22" viewBox="0 0 22 22"><defs><linearGradient id="wg" x1="0" y1="0" x2="1" y2="1"><stop offset="0" stop-color="#5ab8f0"/><stop offset="1" stop-color="#8a5ae8"/></linearGradient></defs><path d="M8 9 L19 20" stroke="#8d63e6" stroke-width="3" stroke-linecap="round"/><path d="M14.5 2 L15.8 4.7 L18.5 6 L15.8 7.3 L14.5 10 L13.2 7.3 L10.5 6 L13.2 4.7 Z" fill="#9a7af0"/><path d="M4 12 L5 14 L7 15 L5 16 L4 18 L3 16 L1 15 L3 14 Z" fill="#5ab8f0"/><circle cx="3.5" cy="3.5" r="1.6" fill="#e08ae8"/><circle cx="7" cy="7.5" r="1.4" fill="#6aa0f0"/></svg>
<div class="t" style="left:94.5px;top:866.94px;font-size:18.5px;font-weight:400;color:#111118;letter-spacing:0.05px;">AI Companion</div>
<div class="b" style="left:785px;top:866px;width:16px;height:17px;border-radius:50%;background:#eeebfb"></div>
<div class="b" style="left:789.5px;top:870.5px;width:7.0px;height:7.0px;border-radius:50%;background:#675ce4"></div>
<div class="t" style="left:811px;top:868.48px;font-size:15.5px;font-weight:400;color:#3a3a44;letter-spacing:-0.2px;">Ask</div>
<svg class="b" style="left:842px;top:866px;" width="17" height="17" viewBox="0 0 17 17"><g fill="none" stroke="#555" stroke-width="1.1"><ellipse cx="8.5" cy="8.5" rx="3.6" ry="7.2" transform="rotate(0 8.5 8.5)"/><ellipse cx="8.5" cy="8.5" rx="3.6" ry="7.2" transform="rotate(60 8.5 8.5)"/><ellipse cx="8.5" cy="8.5" rx="3.6" ry="7.2" transform="rotate(120 8.5 8.5)"/></g></svg>
<div class="t" style="left:864px;top:868.48px;font-size:15.5px;font-weight:400;color:#3a3a44;letter-spacing:-0.2px;">ChatGPT</div>
<div class="b" style="left:62px;top:911px;width:109px;height:37px;border:1.2px solid #dcdce2;border-radius:19px"></div>
<div class="t" style="left:79.5px;top:923.04px;font-size:17.2px;font-weight:400;color:#3a3a44;letter-spacing:-0.05px;">Summary</div>
<div class="b" style="left:183px;top:911px;width:129px;height:37px;border:1.5px solid #6a5fd8;border-radius:19px"></div>
<div class="t" style="left:200.5px;top:923.04px;font-size:17.2px;font-weight:400;color:#6a5fd8;letter-spacing:-0.05px;">Show Notes</div>
<div class="b" style="left:323px;top:911px;width:108px;height:37px;border:1.2px solid #dcdce2;border-radius:19px"></div>
<div class="t" style="left:340.3px;top:923.04px;font-size:17.2px;font-weight:400;color:#3a3a44;letter-spacing:-0.05px;">Blog Post</div>
<div class="b" style="left:444px;top:911px;width:163px;height:37px;border:1.2px solid #dcdce2;border-radius:19px"></div>
<div class="t" style="left:459.8px;top:923.04px;font-size:17.2px;font-weight:400;color:#3a3a44;letter-spacing:-0.05px;">Meeting Minutes</div>
<div class="b" style="left:619px;top:911px;width:133px;height:37px;border:1.2px solid #dcdce2;border-radius:19px"></div>
<div class="t" style="left:636.5px;top:923.04px;font-size:17.2px;font-weight:400;color:#3a3a44;letter-spacing:-0.05px;">Social Media</div>
<div class="b" style="left:62px;top:960px;width:874px;height:140px;background:#f7f7fb;border-radius:10px"></div>
<div class="t" style="left:120px;top:1040.44px;font-size:18.5px;font-weight:400;color:#878792;letter-spacing:0.18px;">Extract key points and timestamps for quick reference, generating clear and concise notes.</div>
<div class="b" style="left:978px;top:150px;width:929px;height:950px;background:#fff;border-radius:8px;box-shadow:0 0 3px rgba(20,20,60,0.05)"></div>
<div class="b" style="left:1005px;top:173px;width:116px;height:43px;background:#f9f9fc;border-radius:8px;box-shadow:0 1px 3px rgba(30,30,80,0.07)"></div>
<svg class="b" style="left:1017px;top:184px;" width="24" height="19" viewBox="0 0 24 19"><path d="M1.5 16.5 L6.5 2.5 L11.5 16.5 M3.5 11 H9.5" fill="none" stroke="#4a4d5a" stroke-width="2.3" stroke-linejoin="round"/><path d="M14 4 H22 M14 9.5 H22 M14 15 H22" stroke="#4a4d5a" stroke-width="2.2"/></svg>
<div class="t" style="left:1049px;top:186.59px;font-size:18.8px;font-weight:400;color:#4a4d5a;letter-spacing:0px;">Reflow</div>
<div class="b" style="left:1130px;top:173px;width:133px;height:43px;background:#f9f9fc;border-radius:8px;box-shadow:0 1px 3px rgba(30,30,80,0.07)"></div>
<svg class="b" style="left:1144px;top:183px;" width="21" height="21" viewBox="0 0 21 21"><text x="0" y="10" font-size="10" font-weight="700" fill="#3a3d4a" font-family="Liberation Sans">中</text><path d="M11 1.5 Q16 1.5 17 6" fill="none" stroke="#3a3d4a" stroke-width="1.8"/><path d="M8.5 19 L13.5 7 L18.5 19 M10.3 15 H16.7" fill="none" stroke="#3a3d4a" stroke-width="2.1"/><path d="M1.5 13 Q1.5 19 7 19" fill="none" stroke="#3a3d4a" stroke-width="1.8"/></svg>
<div class="t" style="left:1173px;top:186.84px;font-size:18.5px;font-weight:400;color:#2e3140;letter-spacing:-0.1px;">Translate</div>
<div class="b" style="left:1272px;top:173px;width:183px;height:43px;background:#f9f9fc;border-radius:8px;box-shadow:0 1px 3px rgba(30,30,80,0.07)"></div>
<svg class="b" style="left:1286px;top:185px;" width="19" height="19" viewBox="0 0 19 19"><defs><linearGradient id="ag1" x1="0" y1="0" x2="1" y2="1"><stop offset="0" stop-color="#f79a34"/><stop offset="0.5" stop-color="#ee5a5a"/><stop offset="1" stop-color="#e447c0"/></linearGradient></defs><rect width="19" height="19" rx="5" fill="url(#ag1)"/><text x="9.5" y="13.6" text-anchor="middle" font-size="10" font-weight="700" fill="#fff" font-family="Liberation Sans">AI</text></svg>
<div class="t" style="left:1315px;top:186.59px;font-size:18.8px;font-weight:400;color:#2e3140;letter-spacing:-0.1px;">Translation</div>
<svg class="b" style="left:1421px;top:190px;" width="13" height="8" viewBox="0 0 13 8"><path d="M1 1 H12 L6.5 7 Z" fill="#2e3140"/></svg>
<div class="b" style="left:1464px;top:173px;width:134px;height:43px;background:#f9f9fc;border-radius:8px;box-shadow:0 1px 3px rgba(30,30,80,0.07)"></div>
<svg class="b" style="left:1477px;top:184px;" width="21" height="20" viewBox="0 0 21 20"><path d="M1.5 6 V1.5 H6 M15 1.5 H19.5 V6 M19.5 14 V18.5 H15 M6 18.5 H1.5 V14" fill="none" stroke="#3a3d4a" stroke-width="2.2"/><path d="M6.5 11 Q10.5 15 14.5 11" fill="none" stroke="#3a3d4a" stroke-width="2"/><circle cx="7.5" cy="7" r="1.3" fill="#3a3d4a"/><circle cx="13.5" cy="7" r="1.3" fill="#3a3d4a"/></svg>
<div class="t" style="left:1507.5px;top:186.84px;font-size:18.5px;font-weight:400;color:#2e3140;letter-spacing:-0.1px;">Speakers</div>
<div class="b" style="left:1606px;top:173px;width:94px;height:43px;background:#f9f9fc;border-radius:8px;box-shadow:0 1px 3px rgba(30,30,80,0.07)"></div>
<svg class="b" style="left:1621px;top:185px;" width="21" height="20" viewBox="0 0 21 20"><circle cx="8.5" cy="8.5" r="7" fill="none" stroke="#2e3140" stroke-width="2.2"/><path d="M13.8 13.8 L18.5 18.5" stroke="#2e3140" stroke-width="2.4" stroke-linecap="round"/></svg>
<div class="t" style="left:1650px;top:186.84px;font-size:18.5px;font-weight:400;color:#2e3140;letter-spacing:-0.1px;">Find</div>
<div class="b" style="left:1708px;top:173px;width:50px;height:43px;background:#f9f9fc;border-radius:8px;box-shadow:0 1px 3px rgba(30,30,80,0.07)"></div>
<div class="b" style="left:1723px;top:191.5px;width:4px;height:4.0px;border-radius:50%;background:#3a3d4a"></div>
<div class="b" style="left:1731.3px;top:191.5px;width:4.0px;height:4.0px;border-radius:50%;background:#3a3d4a"></div>
<div class="b" style="left:1739.5px;top:191.5px;width:4.0px;height:4.0px;border-radius:50%;background:#3a3d4a"></div>
<svg class="b" style="left:1822px;top:185px;" width="23" height="18" viewBox="0 0 23 18"><rect x="1.2" y="1.2" width="20.6" height="15.6" rx="2.5" fill="none" stroke="#2e3140" stroke-width="2.2"/><path d="M5 7 H18 M5 11 H11 M13 11 H18" stroke="#2e3140" stroke-width="2"/></svg>
<svg class="b" style="left:1850px;top:190px;" width="11" height="7" viewBox="0 0 11 7"><path d="M1 1 H10 L5.5 6 Z" fill="#2e3140"/></svg>
<div class="b" style="left:1005px;top:230px;width:145px;height:52px;background:#f9f9fc;border-radius:10px"></div>
<div class="b" style="left:1150px;top:230px;width:721px;height:109px;background:#f9f9fc;border-radius:12px"></div>
<div class="t" style="left:1026.5px;top:247.84px;font-size:17.2px;font-weight:400;color:#3e3e48;letter-spacing:-0.05px;">00:12.46&nbsp; - &nbsp;0</div>
<div class="b" style="left:1005px;top:358px;width:145px;height:52px;background:#f9f9fc;border-radius:10px"></div>
<div class="b" style="left:1150px;top:358px;width:721px;height:109px;background:#f9f9fc;border-radius:12px"></div>
<div class="t" style="left:1026.5px;top:375.84px;font-size:17.2px;font-weight:400;color:#3e3e48;letter-spacing:-0.05px;">00:16.92&nbsp; - &nbsp;0</div>
<div class="b" style="left:1005px;top:486px;width:145px;height:52px;background:#f9f9fc;border-radius:10px"></div>
<div class="b" style="left:1150px;top:486px;width:721px;height:109px;background:#f9f9fc;border-radius:12px"></div>
<div class="t" style="left:1026.5px;top:503.84px;font-size:17.2px;font-weight:400;color:#3e3e48;letter-spacing:-0.05px;">00:19.44&nbsp; - &nbsp;0</div>
<div class="b" style="left:1005px;top:613px;width:145px;height:52px;background:#f9f9fc;border-radius:10px"></div>
<div class="b" style="left:1150px;top:613px;width:721px;height:110px;background:#fafafd;border:2px solid #8d85dc;border-radius:12px"></div>
<div class="t" style="left:1026.5px;top:630.84px;font-size:17.2px;font-weight:400;color:#6a5fd8;letter-spacing:-0.05px;">00:20.98&nbsp; - &nbsp;0</div>
<div class="b" style="left:1005px;top:741px;width:145px;height:52px;background:#f9f9fc;border-radius:10px"></div>
<div class="b" style="left:1150px;top:741px;width:721px;height:109px;background:#f9f9fc;border-radius:12px"></div>
<div class="t" style="left:1026.5px;top:758.84px;font-size:17.2px;font-weight:400;color:#3e3e48;letter-spacing:-0.05px;">00:23.84&nbsp; - &nbsp;0</div>
<div class="b" style="left:1005px;top:869px;width:145px;height:52px;background:#f9f9fc;border-radius:10px"></div>
<div class="b" style="left:1150px;top:869px;width:721px;height:109px;background:#f9f9fc;border-radius:12px"></div>
<div class="t" style="left:1026.5px;top:886.84px;font-size:17.2px;font-weight:400;color:#3e3e48;letter-spacing:-0.05px;">00:26.76&nbsp; - &nbsp;0</div>
<div class="b" style="left:1005px;top:997px;width:145px;height:52px;background:#f9f9fc;border-radius:10px"></div>
<div class="b" style="left:1150px;top:997px;width:721px;height:109px;background:#f9f9fc;border-radius:12px"></div>
<div class="t" style="left:1026.5px;top:1014.84px;font-size:17.2px;font-weight:400;color:#3e3e48;letter-spacing:-0.05px;">00:28.40&nbsp; - &nbsp;0</div>
<div class="t" style="left:1715px;top:1015.36px;font-size:18px;font-weight:400;color:#222;">,</div>
<div class="t" style="left:1712px;top:380.75px;font-size:14px;font-weight:400;color:#444;">.</div>
<div class="t" style="left:1233px;top:1070.94px;font-size:18.5px;font-weight:400;color:#1f1f28;letter-spacing:0.05px;">but you get enough done in the first week that</div>
<div class="b" style="left:1128px;top:226px;width:586px;height:834px;background:#fff;border-radius:10px;box-shadow:0 4px 14px rgba(30,30,70,0.10), 0 0 1px rgba(30,30,70,0.10)"></div>
<div class="t" style="left:1157px;top:250.44px;font-size:19.8px;font-weight:700;color:#111118;letter-spacing:-0.3px;">Translation options</div>
<div class="b" style="left:1157px;top:292px;width:529px;height:101px;background:#f8f8fc;border-radius:8px"></div>
<svg class="b" style="left:1185px;top:317px;" width="22" height="21" viewBox="0 0 22 21"><rect width="22" height="21" rx="4" fill="#3f8a3a"/><text x="3" y="17.5" font-size="9" fill="#e8f5e8" font-family="Liberation Sans">a</text><path d="M4 4 L8 8 M4 8 L8 4" stroke="#e8f5e8" stroke-width="1.6"/><path d="M13 13 L17 17 M13 17 L17 13" stroke="#e8f5e8" stroke-width="1.6"/><text x="12" y="9" font-size="8" fill="#e8f5e8" font-family="Liberation Sans">文</text></svg>
<div class="t" style="left:1213px;top:318.80px;font-size:18.9px;font-weight:700;color:#111118;letter-spacing:0.05px;">Microsoft</div>
<div class="t" style="left:1185.3px;top:353.25px;font-size:16.6px;font-weight:400;color:#9a9aa6;letter-spacing:0px;">Good quality</div>
<div class="b" style="left:1291px;top:351px;width:37px;height:21.5px;background:#6cc24a;border-radius:5px"></div>
<div class="t" style="left:1296px;top:356.73px;font-size:12.6px;font-weight:700;color:#ffffff;letter-spacing:-0.1px;">Free</div>
<svg class="b" style="left:1337px;top:350px;" width="22" height="22" viewBox="0 0 22 22"><circle cx="11" cy="11" r="9.2" fill="none" stroke="#6a5fe0" stroke-width="1.7"/><circle cx="11" cy="6.8" r="1.3" fill="#6a5fe0"/><rect x="10" y="9.3" width="2" height="6.5" rx="0.8" fill="#6a5fe0"/></svg>
<div class="b" style="left:1157px;top:408px;width:529px;height:102px;background:#f8f8fc;border-radius:8px"></div>
<svg class="b" style="left:1186px;top:433px;" width="20" height="19" viewBox="0 0 20 19"><defs><linearGradient id="ag2" x1="0.8" y1="0" x2="0.2" y2="1"><stop offset="0" stop-color="#b67af2"/><stop offset="1" stop-color="#5fa0f2"/></linearGradient></defs><rect width="20" height="19" rx="5" fill="url(#ag2)"/><text x="10" y="13.6" text-anchor="middle" font-size="10" font-weight="700" fill="#fff" font-family="Liberation Sans">AI</text></svg>
<div class="t" style="left:1212.5px;top:434.77px;font-size:18.7px;font-weight:700;color:#111118;letter-spacing:-0.1px;">SubEasy AI</div>
<div class="t" style="left:1185.5px;top:468.39px;font-size:16.2px;font-weight:400;color:#9a9aa6;letter-spacing:0px;">Excellent Quality</div>
<div class="b" style="left:1318px;top:466px;width:82px;height:22px;background:#6cc24a;border-radius:5px"></div>
<div class="t" style="left:1323.5px;top:472.23px;font-size:12.6px;font-weight:700;color:#ffffff;letter-spacing:-0.25px;">Free for Pro</div>
<svg class="b" style="left:1409px;top:466px;" width="22" height="22" viewBox="0 0 22 22"><circle cx="11" cy="11" r="9.2" fill="none" stroke="#6a5fe0" stroke-width="1.7"/><circle cx="11" cy="6.8" r="1.3" fill="#6a5fe0"/><rect x="10" y="9.3" width="2" height="6.5" rx="0.8" fill="#6a5fe0"/></svg>
<div class="b" style="left:1157px;top:524px;width:530px;height:99px;background:#f9f9fe;border:1.5px solid #a89ff0;border-radius:10px"></div>
<svg class="b" style="left:1186px;top:549px;" width="20" height="19" viewBox="0 0 20 19"><rect width="20" height="19" rx="5" fill="url(#ag1)"/><text x="10" y="13.6" text-anchor="middle" font-size="10" font-weight="700" fill="#fff" font-family="Liberation Sans">AI</text></svg>
<div class="t" style="left:1212.5px;top:550.27px;font-size:18.7px;font-weight:700;color:#6a5fd8;letter-spacing:-0.2px;">SubEasy AI Plus</div>
<div class="b" style="left:1366px;top:549.5px;width:40px;height:20.5px;background:#f3c76c;border-radius:4px"></div>
<div class="t" style="left:1372.5px;top:554.93px;font-size:12.6px;font-weight:700;color:#6b4a1e;letter-spacing:-0.3px;">PRO</div>
<div class="t" style="left:1185.5px;top:584.02px;font-size:16.4px;font-weight:400;color:#9a9aa6;letter-spacing:0px;">Superior Quality</div>
<div class="t" style="left:1315.5px;top:584.86px;font-size:15.4px;font-weight:700;color:#6a5fd8;letter-spacing:-0.2px;">2 credits/minute</div>
<div class="t" style="left:1157px;top:677.09px;font-size:19.5px;font-weight:700;color:#111118;letter-spacing:-0.05px;">Translate to</div>
<div class="b" style="left:1277px;top:670px;width:175px;height:32px;background:#f5f5f9;border-radius:8px"></div>
<div class="t" style="left:1288px;top:679.48px;font-size:15.5px;font-weight:700;color:#aeaeb8;letter-spacing:-0.3px;">Search</div>
<div class="t" style="left:1555.5px;top:678.06px;font-size:16px;font-weight:400;color:#3a3a44;letter-spacing:-0.05px;">Localizations</div>
<svg class="b" style="left:1657px;top:677px;" width="18" height="16" viewBox="0 0 18 16"><path d="M1 2.2 H17 M1 7.5 H17 M1 13 H17" stroke="#3a3a44" stroke-width="1.3"/><circle cx="6" cy="2.2" r="1.9" fill="#fff" stroke="#3a3a44" stroke-width="1.2"/><circle cx="11" cy="7.5" r="1.9" fill="#fff" stroke="#3a3a44" stroke-width="1.2"/><circle cx="6" cy="13" r="1.9" fill="#fff" stroke="#3a3a44" stroke-width="1.2"/></svg>
<div class="b" style="left:1157px;top:730px;width:170px;height:50px;background:#f9f9fb;border-radius:8px"></div>
<div class="t" style="left:942.0px;width:600px;text-align:center;top:746.52px;font-size:19px;font-weight:400;color:#16161e;letter-spacing:-0.3px;">English</div>
<div class="b" style="left:1337px;top:730px;width:171px;height:50px;background:#f9f8fe;border:2px solid #c2bcee;border-radius:8px"></div>
<div class="t" style="left:1122.5px;width:600px;text-align:center;top:746.52px;font-size:19px;font-weight:400;color:#6a5fd8;letter-spacing:-0.3px;">Spanish</div>
<div class="b" style="left:1517px;top:730px;width:170px;height:50px;background:#f9f9fb;border-radius:8px"></div>
<div class="t" style="left:1302.0px;width:600px;text-align:center;top:746.52px;font-size:19px;font-weight:400;color:#16161e;letter-spacing:-0.3px;">French</div>
<div class="b" style="left:1157px;top:790px;width:170px;height:50px;background:#f9f9fb;border-radius:8px"></div>
<div class="t" style="left:942.0px;width:600px;text-align:center;top:806.52px;font-size:19px;font-weight:400;color:#16161e;letter-spacing:-0.3px;">German</div>
<div class="b" style="left:1337px;top:790px;width:171px;height:50px;background:#f9f9fb;border-radius:8px"></div>
<div class="t" style="left:1122.5px;width:600px;text-align:center;top:806.52px;font-size:19px;font-weight:400;color:#16161e;letter-spacing:-0.3px;">Russian</div>
<div class="b" style="left:1517px;top:790px;width:170px;height:50px;background:#f9f9fb;border-radius:8px"></div>
<div class="t" style="left:1302.0px;width:600px;text-align:center;top:806.52px;font-size:19px;font-weight:400;color:#16161e;letter-spacing:-0.3px;">Chinese(Simpli...</div>
<div class="b" style="left:1157px;top:850px;width:170px;height:50px;background:#f9f9fb;border-radius:8px"></div>
<div class="t" style="left:942.0px;width:600px;text-align:center;top:866.52px;font-size:19px;font-weight:400;color:#16161e;letter-spacing:-0.3px;">Chinese (Traditi...</div>
<div class="b" style="left:1337px;top:850px;width:171px;height:50px;background:#f9f9fb;border-radius:8px"></div>
<div class="t" style="left:1122.5px;width:600px;text-align:center;top:866.52px;font-size:19px;font-weight:400;color:#16161e;letter-spacing:-0.3px;">Japanese</div>
<div class="b" style="left:1517px;top:850px;width:170px;height:50px;background:#f9f9fb;border-radius:8px"></div>
<div class="t" style="left:1302.0px;width:600px;text-align:center;top:866.52px;font-size:19px;font-weight:400;color:#16161e;letter-spacing:-0.3px;">Korean</div>
<div class="b" style="left:1157px;top:909px;width:170px;height:50px;background:#f9f9fb;border-radius:8px"></div>
<div class="t" style="left:942.0px;width:600px;text-align:center;top:925.52px;font-size:19px;font-weight:400;color:#16161e;letter-spacing:-0.3px;">Arabic</div>
<div class="b" style="left:1337px;top:909px;width:171px;height:50px;background:#f9f9fb;border-radius:8px"></div>
<div class="t" style="left:1122.5px;width:600px;text-align:center;top:925.52px;font-size:19px;font-weight:400;color:#16161e;letter-spacing:-0.3px;">Portuguese</div>
<div class="b" style="left:1517px;top:909px;width:170px;height:50px;background:#f9f9fb;border-radius:8px"></div>
<div class="t" style="left:1302.0px;width:600px;text-align:center;top:925.52px;font-size:19px;font-weight:400;color:#16161e;letter-spacing:-0.3px;">Italian</div>
<div class="b" style="left:1157px;top:962px;width:530px;height:1.5px;background:#e9e9ef"></div>
<div class="t" style="left:1156.5px;top:1007.92px;font-size:19px;font-weight:400;color:#8b8b96;letter-spacing:-0.3px;">Remaining: 9681.55</div>
<div class="t" style="left:1381.5px;top:1007.92px;font-size:19px;font-weight:400;color:#8b8b96;letter-spacing:-0.28px;">Requires <span style="color:#6a5fd8;font-weight:700">28.14</span> credits</div>
<div class="b" style="left:1577px;top:992px;width:110px;height:49px;background:#675ce4;border-radius:25px"></div>
<div class="t" style="left:1594.5px;top:1009.46px;font-size:17.3px;font-weight:700;color:#ffffff;letter-spacing:-0.1px;">Translate</div>
<div class="b" style="left:520px;top:1092px;width:1080px;height:48px;background:rgba(0,0,0,0.12);border-radius:40px;box-shadow:0 0 28px 14px rgba(0,0,0,0.10)"></div>
</body></html>
